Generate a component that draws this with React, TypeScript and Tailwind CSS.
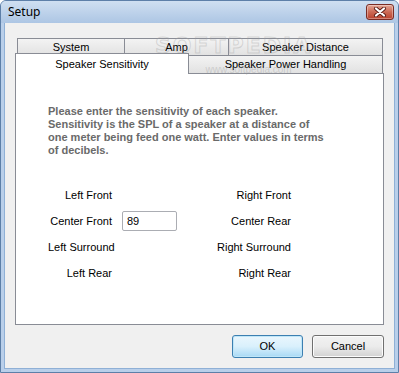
import React from 'react';

const rows = [
    { left: 'Left Front', value: null, right: 'Right Front' },
    { left: 'Center Front', value: '89', right: 'Center Rear' },
    { left: 'Left Surround', value: null, right: 'Right Surround' },
    { left: 'Left Rear', value: null, right: 'Right Rear' },
];

const backTab = 'flex items-center justify-center h-[17px] border border-b-0 border-[#898c95] bg-gradient-to-b from-[#f3f3f3] to-[#e2e2e2] text-black';

const CloseButton = () => (
    <div className="flex items-center justify-center w-[28px] h-[16px] rounded-[3px] border border-[#7a2c24] bg-gradient-to-b from-[#e3a595] via-[#cc6a55] to-[#b9412d] shadow-[inset_0_0_0_1px_rgba(255,255,255,0.35)]">
        <svg width="14" height="10" viewBox="0 0 14 10">
            <path d="M3 1.5 L11 8.5 M11 1.5 L3 8.5" stroke="#5a1d16" strokeWidth="4" strokeLinecap="round" />
            <path d="M3 1.5 L11 8.5 M11 1.5 L3 8.5" stroke="#ffffff" strokeWidth="2.2" strokeLinecap="round" />
        </svg>
    </div>
);

export default function App() {
    return (
        <div className="w-[399px] h-[373px] flex flex-col bg-[#b9cfea] border border-[#5d7fa8] rounded-t-[6px] overflow-hidden text-[11px] font-['Liberation_Sans',Arial,sans-serif]">
            {/* Title bar */}
            <div className="h-[22px] flex items-center justify-between pl-[7px] pr-[4px] bg-gradient-to-b from-[#cfdff1] to-[#adc6e4]">
                <span className="text-[12px] text-black font-['Noto_Sans',sans-serif] leading-none">Setup</span>
                <CloseButton />
            </div>

            {/* Client area */}
            <div className="relative flex-1 mx-[3px] mb-[3px] bg-[#f0f0f0] border-l border-r border-b border-[#8fb0d6] flex flex-col">
                {/* Tabs */}
                <div className="mt-[15px] ml-[10px] flex flex-col">
                    <div className="flex ml-[2px]">
                        <div className={`${backTab} w-[108px]`}>System</div>
                        <div className={`${backTab} w-[104px] border-l-0`}>Amp</div>
                        <div className={`${backTab} w-[154px] border-l-0`}>Speaker Distance</div>
                    </div>
                    <div className="relative z-10 flex items-end -mt-[2px] h-[21px]">
                        <div className="flex items-start justify-center pt-[2px] w-[174px] h-[21px] bg-white border border-b-0 border-[#898c95] text-black">Speaker Sensitivity</div>
                        <div className="flex items-center justify-center w-[194px] h-[18px] mb-[1px] border border-b-0 border-l-0 border-[#898c95] bg-gradient-to-b from-[#f3f3f3] to-[#e2e2e2] text-black">Speaker Power Handling</div>
                    </div>
                </div>

                {/* Panel */}
                <div className="ml-[10px] -mt-[1px] w-[369px] h-[252px] bg-white border border-[#898c95] pt-[31px] pl-[32px]">
                    <p className="font-bold text-[#6a6a6a] text-[11px] leading-[13px]">
                        Please enter the sensitivity of each speaker.<br />
                        Sensitivity is the SPL of a speaker at a distance of<br />
                        one meter being feed one watt. Enter values in terms<br />
                        of decibels.
                    </p>
                    <div className="mt-[28px] flex flex-col gap-[6px]">
                        {rows.map(row => (
                            <div key={row.left} className="flex items-center h-[20px] text-black">
                                <span className="w-[64px] text-right whitespace-nowrap">{row.left}</span>
                                <div className="ml-[10px] w-[55px] h-[20px]">
                                    {row.value && (
                                        <div className="h-full flex items-center pl-[4px] border border-[#abadb3] rounded-[2px] bg-white">{row.value}</div>
                                    )}
                                </div>
                                <span className="w-[114px] text-right whitespace-nowrap">{row.right}</span>
                            </div>
                        ))}
                    </div>
                </div>

                {/* Buttons */}
                <div className="flex justify-end gap-[9px] mt-[10px] mr-[10px]">
                    <button className="w-[71px] h-[23px] rounded-[3px] border border-[#3c7fb1] bg-gradient-to-b from-[#eaf6fd] via-[#d9f0fc] to-[#a7d9f5] shadow-[inset_0_0_0_1px_#bfe6f8] text-black">OK</button>
                    <button className="w-[72px] h-[23px] rounded-[3px] border border-[#707070] bg-gradient-to-b from-[#f2f2f2] via-[#ebebeb] to-[#d2d2d2] shadow-[inset_0_0_0_1px_#fcfcfc] text-black">Cancel</button>
                </div>

                {/* Watermark */}
                <div className="absolute left-[150px] top-[12px] flex flex-col items-center pointer-events-none z-20">
                    <span className="text-[22px] font-bold tracking-[2px] leading-none text-transparent [-webkit-text-stroke:1px_rgba(160,160,160,0.35)] font-['DejaVu_Sans',sans-serif]">SOFTPEDIA</span>
                    <span className="mt-[8px] ml-[30px] text-[10px] leading-none text-[rgba(150,150,150,0.35)]">www.softpedia.com</span>
                </div>
            </div>
        </div>
    );
}
